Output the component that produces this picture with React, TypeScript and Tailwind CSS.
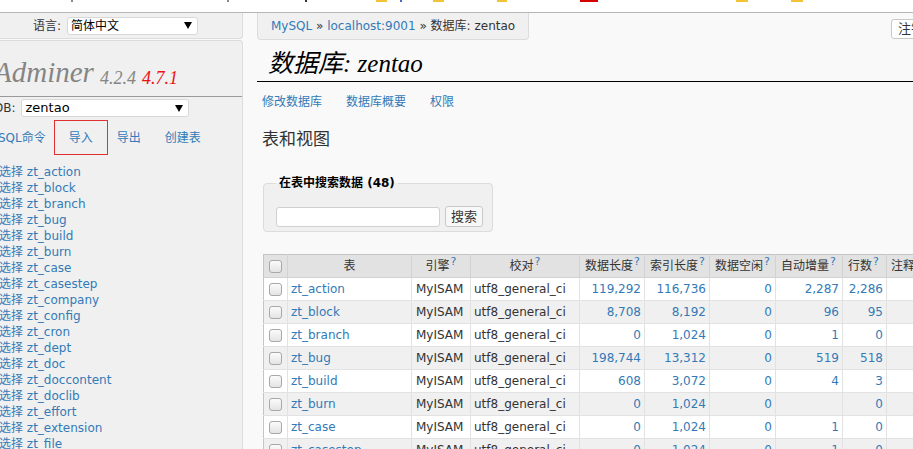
import React from "react";

// tiny bits of the browser bookmark bar that peek in at the very top
const topMarks = [
  "ml-[71px] w-[2px] bg-[#8a8a8a]",
  "ml-[154px] w-[2px] bg-[#8a8a8a]",
  "ml-[76px] w-[2px] bg-[#333]",
  "ml-[69px] w-[11px] bg-[#f2c335]",
  "ml-[13px] w-[2px] bg-[#4a68c8]",
  "ml-[31px] w-[11px] bg-[#f2c335]",
  "ml-[53px] w-[10px] bg-[#f2c335]",
  "ml-[73px] w-[18px] bg-[#d40000]",
  "ml-[138px] w-[12px] bg-[#f2c335]",
  "ml-[43px] w-[12px] bg-[#f2c335]",
];

const tableNames = [
  "zt_action",
  "zt_block",
  "zt_branch",
  "zt_bug",
  "zt_build",
  "zt_burn",
  "zt_case",
  "zt_casestep",
  "zt_company",
  "zt_config",
  "zt_cron",
  "zt_dept",
  "zt_doc",
  "zt_doccontent",
  "zt_doclib",
  "zt_effort",
  "zt_extension",
  "zt_file",
];

const tableRows = [
  { name: "zt_action", data: "119,292", index: "116,736", free: "0", auto: "2,287", rows: "2,286" },
  { name: "zt_block", data: "8,708", index: "8,192", free: "0", auto: "96", rows: "95" },
  { name: "zt_branch", data: "0", index: "1,024", free: "0", auto: "1", rows: "0" },
  { name: "zt_bug", data: "198,744", index: "13,312", free: "0", auto: "519", rows: "518" },
  { name: "zt_build", data: "608", index: "3,072", free: "0", auto: "4", rows: "3" },
  { name: "zt_burn", data: "0", index: "1,024", free: "0", auto: "", rows: "0" },
  { name: "zt_case", data: "0", index: "1,024", free: "0", auto: "1", rows: "0" },
  { name: "zt_casestep", data: "0", index: "1,024", free: "0", auto: "1", rows: "0" },
];

const Arrow = () => (
  <svg width="8" height="7" viewBox="0 0 8 7" className="shrink-0">
    <path d="M0 0 H8 L4 7 Z" fill="#000" />
  </svg>
);

const Checkbox = () => (
  <div className="mx-auto h-[13px] w-[13px] rounded-[3px] border border-[#a8a8a8] bg-gradient-to-b from-[#fbfbfb] to-[#e4e4e4]" />
);

const Help = () => <sup className="ml-[1px] text-[11px] text-[#337ab7]">?</sup>;

export default function App() {
  return (
    <div className="flex h-[449px] w-[913px] flex-col overflow-hidden bg-[#f9f9f9] font-['DejaVu_Sans','Noto_Sans_CJK_SC',sans-serif] text-[12px] text-[#333]">
      <div className="flex h-[13px] shrink-0 items-start border-b border-[#b5b5b5] bg-white">
        {topMarks.map((cls, i) => (
          <div key={i} className={`h-[2px] ${cls}`} />
        ))}
      </div>

      <div className="flex min-h-0 flex-1">
        {/* left menu */}
        <aside className="flex w-[243px] shrink-0 flex-col gap-[1px]">
          <div className="flex h-[26px] shrink-0 items-center rounded-br-[4px] border-r border-b border-[#dcdcdc] bg-[#f0f0f0] pl-[33px]">
            <span>语言:</span>
            <div className="ml-[6px] flex h-[18px] w-[131px] items-center justify-between rounded-[3px] border border-[#d8d8d8] bg-white pr-[5px] pl-[3px] text-[12px] text-black">
              <span>简体中文</span>
              <Arrow />
            </div>
          </div>

          <div className="flex min-h-0 flex-1 flex-col overflow-hidden rounded-tr-[4px] border-t border-r border-[#dcdcdc] bg-[#f0f0f0]">
            <h1 className="flex h-[56px] shrink-0 items-end border-b border-[#9a9a9a] pb-[9px] pl-0 font-['Liberation_Serif',serif] leading-none italic">
              <span className="-ml-[6px] text-[29px] text-[#858585]">Adminer</span>
              <span className="ml-[6px] text-[18px] text-[#858585]">4.2.4</span>
              <span className="ml-[6px] text-[18px] text-[#ee1111]">4.7.1</span>
            </h1>

            <div className="flex h-[22px] shrink-0 items-center">
              <span className="-ml-[6px] text-[12px]">DB:</span>
              <div className="ml-[5px] flex h-[18px] w-[168px] items-center justify-between rounded-[3px] border border-[#d8d8d8] bg-white pr-[5px] pl-[4px] text-[13px] text-black">
                <span>zentao</span>
                <Arrow />
              </div>
            </div>

            <div className="mt-[1px] flex h-[35px] shrink-0 items-center text-[#337ab7]">
              <span className="-ml-[2px]">SQL命令</span>
              <span className="ml-[8px] flex h-full w-[54px] items-center justify-center border border-[#e0302f]">
                导入
              </span>
              <span className="ml-[9px]">导出</span>
              <span className="ml-[24px]">创建表</span>
            </div>

            <ul className="mt-[9px] flex flex-col text-[#337ab7]">
              {tableNames.map((t) => (
                <li key={t} className="-ml-[1px] leading-[16px] whitespace-nowrap">
                  选择 {t}
                </li>
              ))}
            </ul>
          </div>
        </aside>

        {/* content */}
        <main className="flex min-w-0 flex-1 flex-col overflow-hidden pl-[14px]">
          <div className="flex shrink-0 items-start justify-between">
            <div className="h-[27px] rounded-b-[4px] border border-t-0 border-[#dcdcdc] bg-[#f0f0f0] px-[13px] leading-[26px] whitespace-nowrap">
              <span className="text-[#337ab7]">MySQL</span> » <span className="text-[#337ab7]">localhost:9001</span> » 数据库: zentao
            </div>
            <button className="mt-[6px] -mr-[18px] h-[20px] rounded-[3px] border border-[#c8c8c8] bg-white px-[6px] text-[13px] leading-[18px] text-[#333]">
              注销
            </button>
          </div>

          <h2 className="mt-[9px] shrink-0 border-b border-black pb-[2px] pl-[11px] font-['Liberation_Serif','Noto_Sans_CJK_SC',serif] text-[25px] leading-[30px] text-black italic">
            数据库: zentao
          </h2>

          <div className="mt-[12px] flex shrink-0 gap-[24px] pl-[5px] leading-[16px] text-[#337ab7]">
            <span>修改数据库</span>
            <span>数据库概要</span>
            <span>权限</span>
          </div>

          <h3 className="mt-[19px] shrink-0 pl-[5px] text-[17px] leading-[20px] font-normal text-[#333]">
            表和视图
          </h3>

          <fieldset className="mt-[26px] ml-[6px] w-[230px] shrink-0 rounded-[4px] border border-[#dcdcdc] bg-[#f0f0f0] pb-[4px] pl-[12px]">
            <legend className="px-[3px] leading-[16px] font-bold text-black">在表中搜索数据 (48)</legend>
            <div className="mt-[15px] flex items-center gap-[5px]">
              <div className="h-[20px] w-[164px] rounded-[3px] border border-[#d0d0d0] bg-white" />
              <button className="h-[21px] rounded-[3px] border border-[#c8c8c8] bg-[#f8f8f8] px-[5px] text-[13px] leading-[19px] text-[#333]">
                搜索
              </button>
            </div>
          </fieldset>

          <table className="mt-[22px] ml-[6px] w-[680px] shrink-0 table-fixed border-collapse border-t border-l border-[#c4c4c4] whitespace-nowrap">
            <colgroup>
              <col className="w-[24px]" />
              <col className="w-[124px]" />
              <col className="w-[59px]" />
              <col className="w-[109px]" />
              <col className="w-[65px]" />
              <col className="w-[65px]" />
              <col className="w-[66px]" />
              <col className="w-[67px]" />
              <col className="w-[44px]" />
              <col />
            </colgroup>
            <thead>
              <tr className="h-[23px] bg-[#e2e2e2] text-[#333]">
                <th className="border-r border-b border-[#d2d2d2]">
                  <Checkbox />
                </th>
                <th className="border-r border-b border-[#d2d2d2] font-normal">表</th>
                <th className="border-r border-b border-[#d2d2d2] font-normal">
                  引擎<Help />
                </th>
                <th className="border-r border-b border-[#d2d2d2] font-normal">
                  校对<Help />
                </th>
                <th className="border-r border-b border-[#d2d2d2] pl-[5px] text-left font-normal">
                  数据长度<Help />
                </th>
                <th className="border-r border-b border-[#d2d2d2] pl-[5px] text-left font-normal">
                  索引长度<Help />
                </th>
                <th className="border-r border-b border-[#d2d2d2] pl-[5px] text-left font-normal">
                  数据空闲<Help />
                </th>
                <th className="border-r border-b border-[#d2d2d2] pl-[5px] text-left font-normal">
                  自动增量<Help />
                </th>
                <th className="border-r border-b border-[#d2d2d2] pl-[5px] text-left font-normal">
                  行数<Help />
                </th>
                <th className="border-b border-[#d2d2d2] pl-[4px] text-left font-normal">注释</th>
              </tr>
            </thead>
            <tbody>
              {tableRows.map((r, i) => (
                <tr key={r.name} className={`h-[23px] ${i % 2 ? "bg-[#f0f0f0]" : "bg-white"}`}>
                  <td className="border-r border-b border-[#e2e2e2]">
                    <Checkbox />
                  </td>
                  <td className="border-r border-b border-[#e2e2e2] pl-[3px] text-[#337ab7]">{r.name}</td>
                  <td className="border-r border-b border-[#e2e2e2] pl-[4px]">MyISAM</td>
                  <td className="border-r border-b border-[#e2e2e2] pl-[3px]">utf8_general_ci</td>
                  <td className="border-r border-b border-[#e2e2e2] pr-[3px] text-right text-[#337ab7]">{r.data}</td>
                  <td className="border-r border-b border-[#e2e2e2] pr-[3px] text-right text-[#337ab7]">{r.index}</td>
                  <td className="border-r border-b border-[#e2e2e2] pr-[3px] text-right text-[#337ab7]">{r.free}</td>
                  <td className="border-r border-b border-[#e2e2e2] pr-[3px] text-right text-[#337ab7]">{r.auto}</td>
                  <td className="border-r border-b border-[#e2e2e2] pr-[3px] text-right text-[#337ab7]">{r.rows}</td>
                  <td className="border-b border-[#e2e2e2]" />
                </tr>
              ))}
            </tbody>
          </table>
        </main>
      </div>
    </div>
  );
}
